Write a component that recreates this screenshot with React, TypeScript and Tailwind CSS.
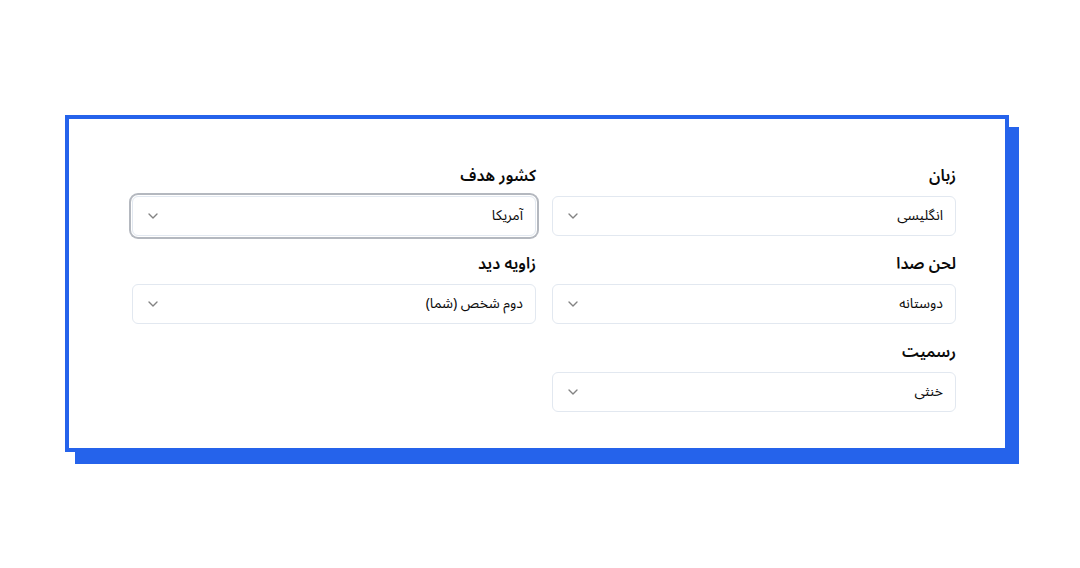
import React from "react";

function Chevron() {
  return (
    <svg xmlns="http://www.w3.org/2000/svg" width="16" height="16" viewBox="0 0 24 24" fill="none" stroke="currentColor" strokeWidth="2" strokeLinecap="round" strokeLinejoin="round" className="h-4 w-4 opacity-50">
      <path d="m6 9 6 6 6-6" />
    </svg>
  );
}

function Field({ label, value, focused }: { label: string; value: string; focused?: boolean }) {
  return (
    <div className="flex flex-col">
      <label className="text-base font-semibold leading-6 text-[#0a0a0a]">{label}</label>
      <div
        className={
          "mt-2 flex h-10 w-full items-center justify-between rounded-md border border-[#e2e8f0] bg-white px-3 py-2 text-sm text-[#0a0a0a]" +
          (focused ? " ring-2 ring-[#b4b8bf] ring-offset-1" : "")
        }
      >
        <span>{value}</span>
        <Chevron />
      </div>
    </div>
  );
}

export default function App() {
  return (
    <div
      dir="rtl"
      className="min-h-[568px] w-[1080px] bg-white"
      style={{ fontFamily: "'Noto Sans Arabic', Vazirmatn, 'Noto Naskh Arabic', Inter, 'Noto Sans', sans-serif" }}
    >
      <div dir="ltr" className="pt-[115px] pl-[65px]">
        <div
          dir="rtl"
          className="h-[337px] w-[944px] border-4 border-[#2563eb] bg-white pt-[45px] pr-[49px] shadow-[10px_12px_0_0_#2563eb]"
        >
          <div className="grid w-[824px] grid-cols-2 gap-x-4 gap-y-4">
            <Field label="زبان" value="انگلیسی" />
            <Field label="کشور هدف" value="آمریکا" focused />
            <Field label="لحن صدا" value="دوستانه" />
            <Field label="زاویه دید" value="دوم شخص (شما)" />
            <Field label="رسمیت" value="خنثی" />
          </div>
        </div>
      </div>
    </div>
  );
}
